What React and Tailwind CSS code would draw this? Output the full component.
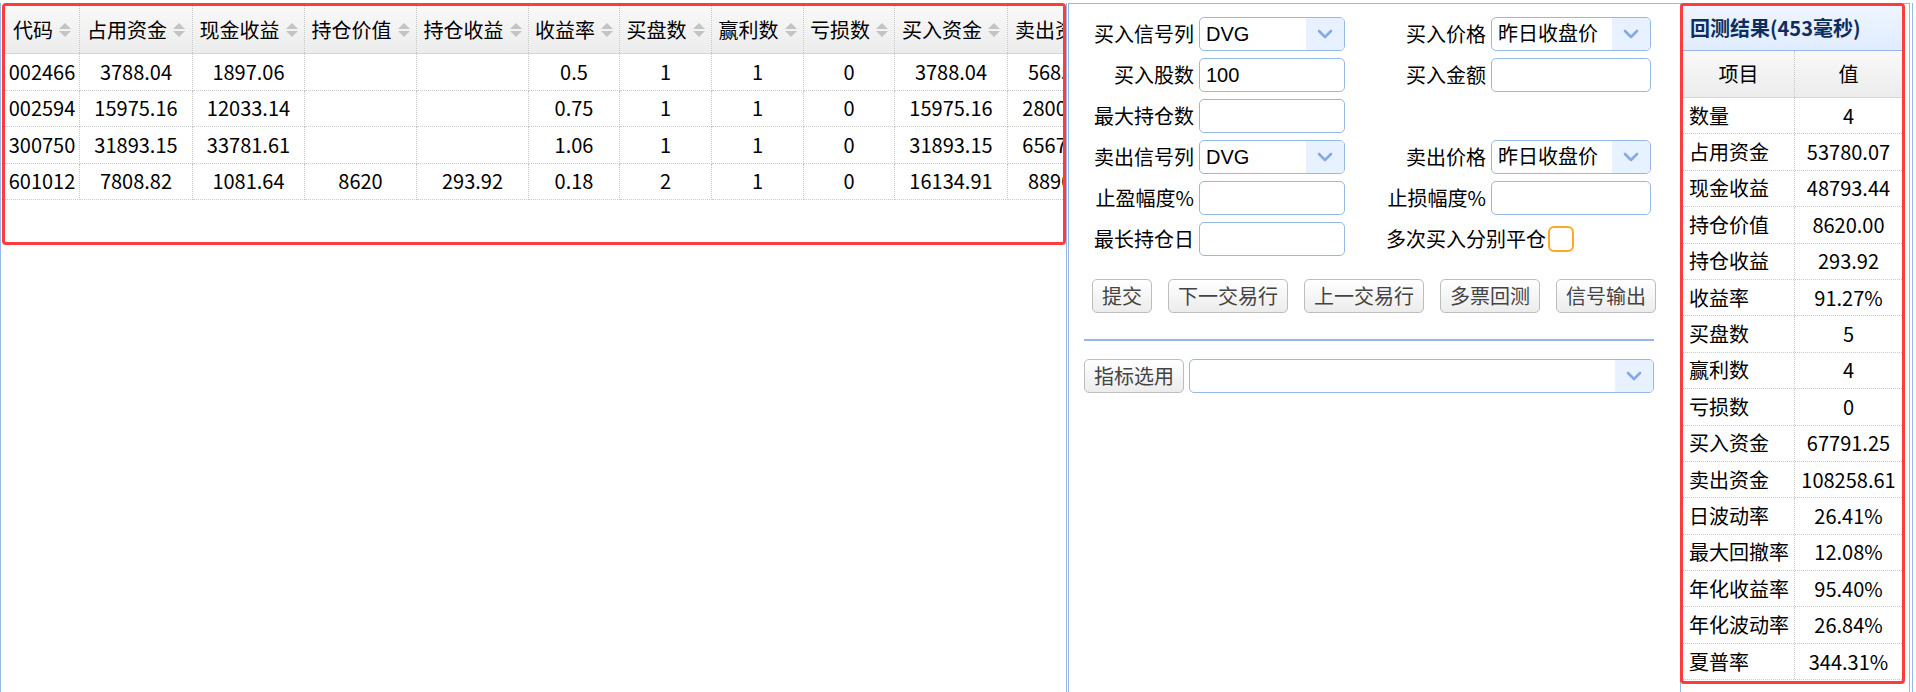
import React from "react";

const cols = [
  { name: "代码", w: "w-[75px]" },
  { name: "占用资金", w: "w-[113px]" },
  { name: "现金收益", w: "w-[112px]" },
  { name: "持仓价值", w: "w-[112px]" },
  { name: "持仓收益", w: "w-[112px]" },
  { name: "收益率", w: "w-[91px]" },
  { name: "买盘数", w: "w-[92px]" },
  { name: "赢利数", w: "w-[92px]" },
  { name: "亏损数", w: "w-[91px]" },
  { name: "买入资金", w: "w-[113px]" },
  { name: "卖出资金", w: "w-[113px]" },
];

const rows = [
  ["002466", "3788.04", "1897.06", "", "", "0.5", "1", "1", "0", "3788.04", "5685.10"],
  ["002594", "15975.16", "12033.14", "", "", "0.75", "1", "1", "0", "15975.16", "28008.30"],
  ["300750", "31893.15", "33781.61", "", "", "1.06", "1", "1", "0", "31893.15", "65674.76"],
  ["601012", "7808.82", "1081.64", "8620", "293.92", "0.18", "2", "1", "0", "16134.91", "8890.46"],
];

const results = [
  ["数量", "4"],
  ["占用资金", "53780.07"],
  ["现金收益", "48793.44"],
  ["持仓价值", "8620.00"],
  ["持仓收益", "293.92"],
  ["收益率", "91.27%"],
  ["买盘数", "5"],
  ["赢利数", "4"],
  ["亏损数", "0"],
  ["买入资金", "67791.25"],
  ["卖出资金", "108258.61"],
  ["日波动率", "26.41%"],
  ["最大回撤率", "12.08%"],
  ["年化收益率", "95.40%"],
  ["年化波动率", "26.84%"],
  ["夏普率", "344.31%"],
];

function SortIcon() {
  return (
    <svg width="12" height="16" viewBox="0 0 12 16" className="shrink-0">
      <polygon points="0,7 6,1 12,7" fill="#c4c4c4" />
      <polygon points="0,9 6,15 12,9" fill="#c4c4c4" />
    </svg>
  );
}

function Chevron() {
  return (
    <svg width="16" height="10" viewBox="0 0 16 10">
      <path d="M2 2 L8 8 L14 2" fill="none" stroke="#84aae6" strokeWidth="2.6" strokeLinecap="round" strokeLinejoin="round" />
    </svg>
  );
}

function Select({ value, w }) {
  return (
    <div className={"flex h-[34px] shrink-0 overflow-hidden rounded-[5px] border border-[#95b8e7] bg-white " + w}>
      <div className="flex flex-1 items-center pl-[6px] font-['Liberation_Sans','Noto_Sans_CJK_SC',sans-serif] text-[20px]">
        {value}
      </div>
      <div className="flex w-[38px] items-center justify-center bg-[#e8f1ff]">
        <Chevron />
      </div>
    </div>
  );
}

function Input({ value, w }) {
  return (
    <div className={"flex h-[34px] shrink-0 items-center rounded-[5px] border border-[#95b8e7] bg-white pl-[6px] font-['Liberation_Sans','Noto_Sans_CJK_SC',sans-serif] text-[20px] " + w}>
      {value}
    </div>
  );
}

function Btn({ children }) {
  return (
    <button className="flex h-[34px] shrink-0 items-center rounded-[5px] border border-[#bdbdbd] bg-linear-to-b from-white to-[#ececec] px-[9px] text-[20px] text-[#444]">
      {children}
    </button>
  );
}

function Label1({ children }) {
  return <div className="w-[115px] shrink-0 pr-[5px] text-right">{children}</div>;
}
function Label2({ children }) {
  return <div className="w-[146px] shrink-0 pr-[5px] text-right">{children}</div>;
}

export default function App() {
  return (
    <div className="flex h-[692px] w-[1916px] overflow-hidden bg-white pt-[3px] font-['Noto_Sans_CJK_SC',sans-serif] text-[20px] leading-[1.2] text-black">
      {/* Left panel */}
      <div className="h-full w-[1067px] shrink-0 border-x border-[#95b8e7]">
        <div className="ml-[1px] h-[242px] w-[1064px] overflow-hidden rounded-[4px] border-[3px] border-[#ff3c3c]">
          <div className="flex h-[48px] w-max border-b border-[#d6d6d6] bg-linear-to-b from-[#f9f9f9] to-[#ececec]">
            {cols.map((c) => (
              <div
                key={c.name}
                className={"flex shrink-0 items-center justify-center gap-[6px] border-r border-dotted border-[#c8c8c8] " + c.w}
              >
                <span>{c.name}</span>
                <SortIcon />
              </div>
            ))}
          </div>
          {rows.map((r) => (
            <div key={r[0]} className="flex h-[36.5px] w-max">
              {r.map((v, i) => (
                <div
                  key={i}
                  className={"flex shrink-0 items-center justify-center border-r border-b border-dotted border-[#c8c8c8] " + cols[i].w}
                >
                  {v}
                </div>
              ))}
            </div>
          ))}
        </div>
      </div>

      <div className="w-[1px] shrink-0" />

      {/* Middle panel */}
      <div className="h-full w-[612px] shrink-0 border-l border-t border-[#95b8e7] pl-[15px] pt-[13px]">
        <div className="flex flex-col gap-[7px]">
          <div className="flex h-[34px] items-center">
            <Label1>买入信号列</Label1>
            <Select value="DVG" w="w-[146px]" />
            <Label2>买入价格</Label2>
            <Select value="昨日收盘价" w="w-[160px]" />
          </div>
          <div className="flex h-[34px] items-center">
            <Label1>买入股数</Label1>
            <Input value="100" w="w-[146px]" />
            <Label2>买入金额</Label2>
            <Input value="" w="w-[160px]" />
          </div>
          <div className="flex h-[34px] items-center">
            <Label1>最大持仓数</Label1>
            <Input value="" w="w-[146px]" />
          </div>
          <div className="flex h-[34px] items-center">
            <Label1>卖出信号列</Label1>
            <Select value="DVG" w="w-[146px]" />
            <Label2>卖出价格</Label2>
            <Select value="昨日收盘价" w="w-[160px]" />
          </div>
          <div className="flex h-[34px] items-center">
            <Label1>止盈幅度%</Label1>
            <Input value="" w="w-[146px]" />
            <Label2>止损幅度%</Label2>
            <Input value="" w="w-[160px]" />
          </div>
          <div className="flex h-[34px] items-center">
            <Label1>最长持仓日</Label1>
            <Input value="" w="w-[146px]" />
            <div className="w-[41px] shrink-0" />
            <span>多次买入分别平仓</span>
            <div className="ml-[2px] h-[26px] w-[26px] rounded-[6px] border-2 border-[#ffa726] bg-white" />
          </div>
        </div>

        <div className="ml-[8px] mt-[23px] flex gap-[16px]">
          <Btn>提交</Btn>
          <Btn>下一交易行</Btn>
          <Btn>上一交易行</Btn>
          <Btn>多票回测</Btn>
          <Btn>信号输出</Btn>
        </div>

        <div className="mt-[26px] h-[2px] w-[570px] bg-[#95b8e7]" />

        <div className="mt-[18px] flex w-[570px] items-center gap-[5px]">
          <Btn>指标选用</Btn>
          <Select value="" w="flex-1" />
        </div>
      </div>

      {/* Right panel */}
      <div className="h-full w-[230px] shrink-0 border-x border-t border-[#95b8e7]">
        <div className="-ml-px -mt-px h-[681px] w-[225px] overflow-hidden rounded-[4px] border-[3px] border-[#ff3c3c]">
          <div className="flex h-[45px] items-center border-b border-[#95b8e7] bg-linear-to-b from-[#eff5ff] to-[#e0ecff] px-[7px] font-bold text-[#0e2d5f]">
            回测结果(453毫秒)
          </div>
          <div className="flex h-[47px] border-b border-[#d6d6d6] bg-linear-to-b from-[#f9f9f9] to-[#ececec]">
            <div className="flex w-[112px] shrink-0 items-center justify-center border-r border-dotted border-[#c8c8c8]">项目</div>
            <div className="flex flex-1 items-center justify-center">值</div>
          </div>
          {results.map(([k, v]) => (
            <div key={k} className="flex h-[36.4px] border-b border-dotted border-[#c8c8c8]">
              <div className="flex w-[112px] shrink-0 items-center border-r border-dotted border-[#c8c8c8] pl-[6px]">{k}</div>
              <div className="flex flex-1 items-center justify-center">{v}</div>
            </div>
          ))}
        </div>
      </div>

      <div className="w-[2px] shrink-0" />
      <div className="h-full w-[1px] shrink-0 bg-[#95b8e7]" />
    </div>
  );
}
